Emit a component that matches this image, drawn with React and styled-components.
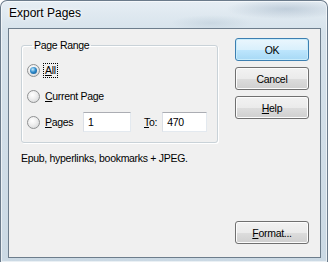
import React from 'react'
import styled, { createGlobalStyle } from 'styled-components'

const Global = createGlobalStyle`
  html, body { margin: 0; padding: 0; background: #ffffff; }
  body { font-family: "Liberation Sans", Arial, sans-serif; }
`

// Aero glass window frame
const Window = styled.div`
  width: 328px;
  height: 262px;
  box-sizing: border-box;
  display: flex;
  flex-direction: column;
  padding: 0 6px 4px 7px;
  border: 1px solid #6b7b8b;
  border-bottom: none;
  border-radius: 7px 7px 0 0;
  background:
    radial-gradient(ellipse 60px 10px at 285px 8px, rgba(150,170,190,0.45), transparent),
    radial-gradient(ellipse 40px 8px at 210px 22px, rgba(170,190,205,0.35), transparent),
    linear-gradient(to bottom, #e6eef4 0%, #d6e2eb 12%, #cbd9e4 100%);
  box-shadow: inset 0 0 0 1px rgba(255,255,255,0.6);
  overflow: hidden;
`

const TitleBar = styled.div`
  height: 27px;
  box-sizing: border-box;
  display: flex;
  align-items: center;
  padding: 0 0 3px 1px;
  font-size: 12px;
  color: #000;
  text-shadow: 0 0 6px #fff, 0 0 3px #fff;
`

const Client = styled.div`
  flex: 1;
  display: flex;
  gap: 17px;
  padding: 9px 11px 13px 12px;
  background: #f0f0f0;
  border: 1px solid #6d7d8c;
  font-size: 10.5px;
  letter-spacing: -0.3px;
  color: #000;
`

const LeftColumn = styled.div`
  width: 199px;
  display: flex;
  flex-direction: column;
`

const GroupBox = styled.fieldset`
  margin: 0;
  padding: 5px 6px 7px 5px;
  border: 1px solid #c9d2d8;
  border-radius: 3px;
  box-shadow: inset 1px 1px 0 #fff, 1px 1px 0 #fff;
`

const Legend = styled.legend`
  margin-left: 5px;
  padding: 0 2px;
  line-height: 14px;
`

const OptionRow = styled.div`
  height: 26px;
  display: flex;
  align-items: center;
`

const Radio = styled.span`
  width: 13px;
  height: 13px;
  box-sizing: border-box;
  border-radius: 50%;
  border: 1px solid #8f9192;
  background: radial-gradient(circle at 40% 35%, #ffffff 0%, #f0f0f0 40%, #cfd1d3 100%);
  display: flex;
  align-items: center;
  justify-content: center;
  flex-shrink: 0;
  &::after {
    content: '';
    display: ${p => (p.$checked ? 'block' : 'none')};
    width: 7px;
    height: 7px;
    border-radius: 50%;
    background: radial-gradient(circle at 40% 35%, #c8ecfb 0%, #2f8bcc 45%, #0f4c82 100%);
  }
`

const Label = styled.span`
  margin-left: 3px;
  width: ${p => (p.$width ? `${p.$width}px` : 'auto')};
  padding: 0 1px;
  line-height: 13px;
  border: 1px dotted ${p => (p.$focus ? '#000' : 'transparent')};
`

const Key = styled.span`
  text-decoration: underline;
  text-underline-offset: 1px;
`

const TextBox = styled.div`
  width: ${p => p.$width}px;
  height: 20px;
  box-sizing: border-box;
  background: #fff;
  border: 1px solid #e3e9ef;
  border-top-color: #abadb3;
  border-left-color: #dbdfe6;
  padding: 0 4px;
  display: flex;
  align-items: center;
`

const ToLabel = styled.span`
  margin: 0 5px 0 13px;
`

const Description = styled.div`
  margin-top: 9px;
  line-height: 13px;
`

const ButtonColumn = styled.div`
  width: 74px;
  display: flex;
  flex-direction: column;
  gap: 6px;
`

const Spacer = styled.div`
  flex: 1;
`

const Button = styled.button`
  width: 74px;
  height: 23px;
  padding: 0;
  font-family: "Liberation Sans", Arial, sans-serif;
  font-size: 10.5px;
  letter-spacing: -0.3px;
  color: #000;
  border-radius: 3px;
  border: 1px solid ${p => (p.$default ? '#3c7fb1' : '#707070')};
  background: ${p =>
    p.$default
      ? 'linear-gradient(to bottom, #eaf6fd 0%, #d9f0fc 50%, #bee6fd 51%, #a7d9f5 100%)'
      : 'linear-gradient(to bottom, #f2f2f2 0%, #ebebeb 50%, #dddddd 51%, #cfcfcf 100%)'};
  box-shadow: inset 0 0 0 1px ${p => (p.$default ? '#c9ecfb' : '#fcfcfc')};
`

function App() {
  return (
    <>
      <Global />
      <Window>
        <TitleBar>Export Pages</TitleBar>
        <Client>
          <LeftColumn>
            <GroupBox>
              <Legend>Page Range</Legend>
              <OptionRow>
                <Radio $checked />
                <Label $focus><Key>A</Key>ll</Label>
              </OptionRow>
              <OptionRow>
                <Radio />
                <Label><Key>C</Key>urrent Page</Label>
              </OptionRow>
              <OptionRow>
                <Radio />
                <Label $width={36}><Key>P</Key>ages</Label>
                <TextBox $width={48}>1</TextBox>
                <ToLabel><Key>T</Key>o:</ToLabel>
                <TextBox $width={45}>470</TextBox>
              </OptionRow>
            </GroupBox>
            <Description>Epub, hyperlinks, bookmarks + JPEG.</Description>
          </LeftColumn>
          <ButtonColumn>
            <Button $default>OK</Button>
            <Button>Cancel</Button>
            <Button><Key>H</Key>elp</Button>
            <Spacer />
            <Button><Key>F</Key>ormat...</Button>
          </ButtonColumn>
        </Client>
      </Window>
    </>
  )
}

export default App
